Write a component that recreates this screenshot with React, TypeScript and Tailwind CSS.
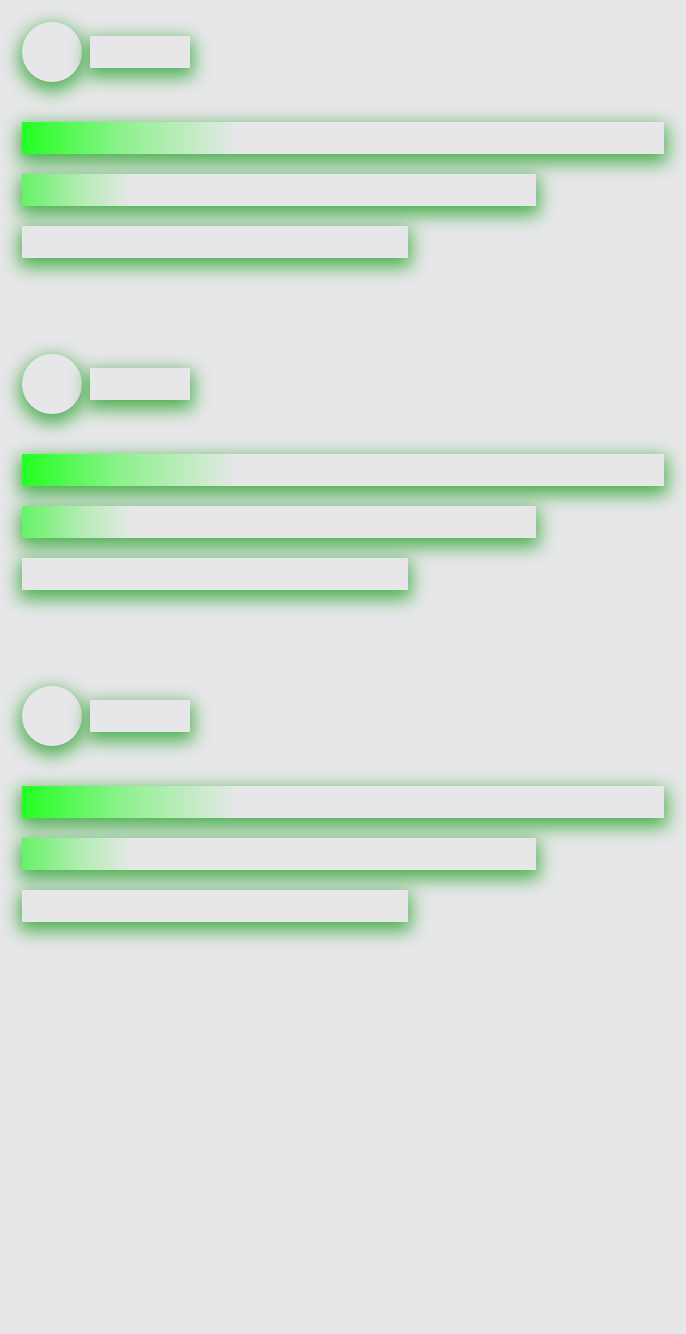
const glow = "shadow-[0_6px_18px_3px_#4caf50]";

function SkeletonCard() {
  return (
    <div className="flex flex-col">
      <div className="flex items-center gap-2">
        <div className={`size-[60px] rounded-full bg-[#e7e7e9] ${glow}`} />
        <div className={`h-8 w-[100px] bg-[#e7e7e9] ${glow}`} />
      </div>
      <div className="mt-10 flex flex-col gap-5">
        <div
          className={`h-8 w-full bg-[linear-gradient(90deg,#22ff22_0px,#8ef28e_100px,#e7e7e9_215px)] ${glow}`}
        />
        <div
          className={`h-8 w-[514px] bg-[linear-gradient(90deg,#66f266_0px,#b4ecb4_60px,#e7e7e9_110px)] ${glow}`}
        />
        <div className={`h-8 w-[386px] bg-[#e7e7e9] ${glow}`} />
      </div>
    </div>
  );
}

export default function App() {
  return (
    <div className="min-h-screen w-full bg-[#e7e7e9] px-[22px] pt-[22px]">
      <div className="flex flex-col gap-24">
        <SkeletonCard />
        <SkeletonCard />
        <SkeletonCard />
      </div>
    </div>
  );
}
